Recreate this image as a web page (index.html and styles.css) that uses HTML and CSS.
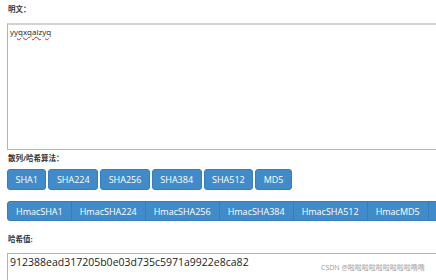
FILE: index.html
```html
<!doctype html>
<html lang="zh">
<head>
    <meta charset="UTF-8">
    <meta name="viewport" content="width=device-width, initial-scale=1.0">
    <title>Hash</title>
    <link rel="stylesheet" href="styles.css">
</head>
<body>

<div class="hash">
    <div class="label">明文：</div>
    <div class="field plain"><span class="typo">yyqxqalzyq</span></div>

    <div class="label label-algo">散列/哈希算法：</div>
    <div class="buttons">
        <button class="btn">SHA1</button>
        <button class="btn">SHA224</button>
        <button class="btn">SHA256</button>
        <button class="btn">SHA384</button>
        <button class="btn">SHA512</button>
        <button class="btn">MD5</button>
    </div>

    <div class="btn-group">
        <button class="btn">HmacSHA1</button>
        <button class="btn">HmacSHA224</button>
        <button class="btn">HmacSHA256</button>
        <button class="btn">HmacSHA384</button>
        <button class="btn">HmacSHA512</button>
        <button class="btn">HmacMD5</button>
        <button class="btn more"></button>
    </div>

    <div class="label label-res">哈希值:</div>
    <div class="field result">
        912388ead317205b0e03d735c5971a9922e8ca82
        <span class="mark">CSDN @啦啦啦啦啦啦啦啦啦噜噜</span>
    </div>
</div>

</body>
</html>
```

FILE: styles.css
```css
body {
    margin: 0;
    padding: 0;
    overflow: hidden;
    background: #fff;
    font-family: "Open Sans", "Noto Sans CJK SC", sans-serif;
}

.hash {
    padding: 4px 0 0 7px;
    width: 470px;
}

.label {
    font-size: 7.5px;
    line-height: 11px;
    font-weight: bold;
    color: #333;
    padding-left: 1px;
    margin-bottom: 8px;
}

.label-algo {
    margin-top: 3px;
    margin-bottom: 5px;
}

.label-res {
    margin-top: 13px;
    margin-bottom: 8px;
}

.field {
    box-sizing: border-box;
    width: 460px;
    border: 1px solid #b4b4b4;
    border-top: 2px solid #d2d2d2;
    background: #fff;
    color: #222;
    position: relative;
}

.plain {
    height: 127px;
    padding: 2px 2px;
    font-size: 8px;
    line-height: 10px;
}

.typo {
    text-decoration: underline wavy #e02020;
    text-decoration-thickness: 1px;
    text-underline-offset: 1px;
}

.result {
    height: 40px;
    border-top: 1px solid #b0b0b0;
    padding: 1px 2px;
    font-size: 10.5px;
    line-height: 14px;
}

.mark {
    position: absolute;
    left: 313px;
    top: 9px;
    font-size: 7px;
    line-height: 9px;
    color: #9a9a9a;
    white-space: nowrap;
}

.buttons {
    display: flex;
    gap: 2px;
}

.btn {
    font-family: "Open Sans", sans-serif;
    font-size: 9px;
    line-height: 13px;
    color: #fff;
    background: #428bca;
    border: 1px solid #357ebd;
    border-radius: 3px;
    padding: 3px 7.5px;
    margin: 0;
    white-space: nowrap;
}

.btn-group {
    display: flex;
    margin-top: 11px;
}

.btn-group .btn {
    padding: 2.5px 8px;
    border-radius: 0;
    margin-left: -1px;
}

.btn-group .btn:first-child {
    border-radius: 3px 0 0 3px;
    margin-left: 0;
}

.btn-group .more {
    width: 30px;
}
```
